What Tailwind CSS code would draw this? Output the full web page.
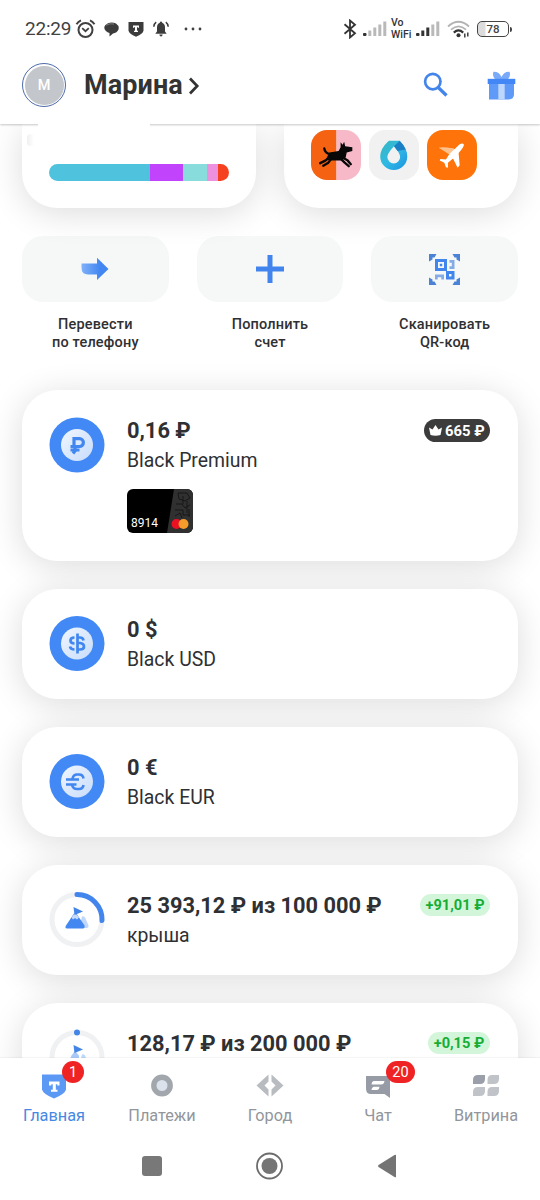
<!DOCTYPE html>
<html lang="ru">
<head>
<meta charset="utf-8">
<title>Главная</title>
<script src="https://cdn.jsdelivr.net/npm/@tailwindcss/browser@4"></script>
</head>
<body class="w-[540px] h-[1200px] overflow-hidden bg-white font-['Roboto','Noto_Sans',sans-serif] text-[#2f3033]">
<div class="flex flex-col w-[540px] h-[1200px]">

<header class="relative z-10 h-[124px] shrink-0 bg-white shadow-[0_1px_2px_rgba(0,0,0,0.22)]">
  <div class="h-[58px] flex items-center pl-[25px] pr-[28px] text-[#414141]">
    <span class="text-[19px] w-[50px] tracking-[-0.2px] whitespace-nowrap pt-[1px]">22:29</span>
    <svg class="w-[21px] h-[20px]" viewBox="0 0 21 20" fill="none" stroke="#414141" stroke-width="2"><circle cx="10.5" cy="11" r="7"/><path d="M1.5 5.2A10 10 0 0 1 6 1.4M19.5 5.2A10 10 0 0 0 15 1.4"/><path d="M7.2 9.2l3.3 3 3.3-3" stroke-width="1.8"/></svg>
    <svg class="w-[15px] h-[15px] ml-[8px]" viewBox="0 0 15 15"><path d="M4 1.2Q8-.6 12 1.6Q15.500 4 14.500 7.500Q13 10.800 9 11.500L5.500 14.500V11Q1 9.500.3 6Q.2 3 4 1.200Z" fill="#3c3c3c"/><path d="M2 3.200Q6 1 10 2" stroke="#999" stroke-width=".7" fill="none"/></svg>
    <svg class="w-[16px] h-[16px] ml-[9px]" viewBox="0 0 16 16"><path d="M.5 1H15.500V9.500Q15 13 8 15.700Q1 13 .5 9.500Z" fill="#3c3c3c"/><path d="M5 4.500h6v2.300H10V6.300H9v3.500h1v1.200H6v-1.200h1V6.300H6V6.800H5Z" fill="#fff"/></svg>
    <svg class="w-[16px] h-[16px] ml-[9px]" viewBox="0 0 16 16"><path d="M8 .6Q9 .6 9.200 1.800Q12 2.800 12 6.500V10.500L13.700 12.800H2.300L4 10.500V6.500Q4 2.800 6.800 1.800Q7 .6 8 .6ZM6.300 13.600h3.400Q9.300 15.500 8 15.500T6.300 13.600Z" fill="#3c3c3c"/><path d="M3.200 1.200Q1 2.700.8 5.800M12.800 1.200Q15 2.700 15.200 5.800" fill="none" stroke="#3c3c3c" stroke-width="1.500"/></svg>
    <svg class="w-[18px] h-[4px] ml-[15px]" viewBox="0 0 18 4" fill="#414141"><circle cx="2" cy="2" r="1.400"/><circle cx="9" cy="2" r="1.400"/><circle cx="16" cy="2" r="1.400"/></svg>
    <span class="grow"></span>
    <svg class="w-[14px] h-[20px] mr-[1px]" viewBox="0 0 14 20" fill="none" stroke="#333" stroke-width="1.800"><path d="M1.500 5.200L12 14.300L7 18.500V1.500L12 5.700L1.500 14.800"/></svg>
    <svg class="w-[24px] h-[16px] ml-[5px]" viewBox="0 0 24 16"><rect x="0" y="12" width="3.500" height="3" rx="1" fill="#333"/><g fill="#b9b9b9"><rect x="5.300" y="9.500" width="3" height="5.500"/><rect x="10.300" y="6.500" width="3" height="8.500"/><rect x="15.300" y="3.500" width="3" height="11.500"/><rect x="20.300" y=".5" width="3" height="14.500"/></g></svg>
    <div class="ml-[4px] w-[21px] flex flex-col text-[10.5px] leading-[12px] font-medium whitespace-nowrap text-[#333]"><span>Vo</span><span>WiFi</span></div>
    <svg class="w-[24px] h-[16px] ml-[4px]" viewBox="0 0 24 16"><rect x="0" y="12" width="3.500" height="3" rx="1" fill="#333"/><g fill="#333"><rect x="5.300" y="9.500" width="3" height="5.500"/><rect x="10.300" y="6.500" width="3" height="8.500"/></g><g fill="#b9b9b9"><rect x="15.300" y="3.500" width="3" height="11.500"/><rect x="20.300" y=".5" width="3" height="14.500"/></g></svg>
    <svg class="w-[23px] h-[18px] ml-[7px]" viewBox="0 0 23 18" fill="none"><path d="M1 6.500Q11.500-3 22 6.500M4 9.700Q11.500 3 19 9.700" stroke="#b3b3b3" stroke-width="1.800"/><path d="M6.800 12.600Q11.500 8.300 16.200 12.600" stroke="#333" stroke-width="2.200"/><circle cx="11.500" cy="15.300" r="2" fill="#333"/><path d="M17.800 13.500v4M20.800 12.500v4" stroke="#333" stroke-width="1.400"/></svg>
    <div class="ml-[7px] w-[32px] h-[16px] rounded-[5px] border-[1.5px] border-[#444] bg-[linear-gradient(90deg,#dcdcdc_0,#dcdcdc_7px,#fff_8px)] flex items-center justify-center text-[11.5px] font-medium text-[#444] leading-none pt-[1px]">78</div>
    <div class="w-[2px] h-[5px] ml-[1px] rounded-r bg-[#444]"></div>
  </div>
  <div class="h-[54px] flex items-center pl-[22px] pr-[24px]">
    <div class="size-[44px] rounded-full border-[1.5px] border-[#4d6aa8] p-[1.5px]"><div class="size-full rounded-full bg-[#c3c6cb] text-white flex items-center justify-center text-[14.5px] font-medium pt-[1px]">М</div></div>
    <span class="ml-[18px] w-[100px] text-[27px] font-bold tracking-[0.1px] whitespace-nowrap text-[#333]">Марина</span>
    <svg class="w-[12px] h-[18px] ml-[4px] mt-[2px]" viewBox="0 0 12 18" fill="none" stroke="#333" stroke-width="2.700"><path d="M2 1.500L9.200 9L2 16.500"/></svg>
    <span class="grow"></span>
    <svg class="w-[25px] h-[25px] mt-[-1px]" viewBox="0 0 25 25" fill="none" stroke="#4385ea"><circle cx="9.800" cy="9.600" r="7.700" stroke-width="2.700"/><path d="M15.300 15.500L23.500 23.500" stroke-width="3.200"/></svg>
    <svg class="w-[29px] h-[29px] ml-[39px]" viewBox="0 0 29 29"><path d="M6.500.8Q12 .5 14.500 6Q17 .5 22.500.8Q24 5 21 8H8Q5 5 6.500.8Z" fill="#79a9f8"/><path d="M2 12H27V24Q26.500 28 22 28.500H2Z" fill="#609af9"/><path d="M11.300 12h6.400v16.500h-6.400Z" fill="#bcd6fd"/><path d="M.7 7.800H28.300V13H.7Z" fill="#4287f5"/></svg>
  </div>
  <div class="absolute left-[38px] top-[122px] w-[112px] h-[6px] rounded bg-white"></div>
</header>

<main class="h-[934px] shrink-0 overflow-hidden px-[22px]">
  <div class="flex gap-[28px]">
    <div class="relative w-[234px] h-[84px] rounded-b-[35px] bg-white shadow-[0_5px_34px_rgba(0,0,0,0.14)] px-[27px] pt-[40px]">
      <div class="absolute left-[5px] top-[10px] w-[7px] h-[12px] rounded-full bg-linear-to-r from-[#f0f0f0] to-white"></div>
      <div class="flex w-[180px] h-[17px] rounded-full overflow-hidden"><div class="w-[101px] bg-[#4fc3dd]"></div><div class="w-[33px] bg-[#c144fc]"></div><div class="w-[24px] bg-[#88dcdb]"></div><div class="w-[11px] bg-[#ed91df]"></div><div class="w-[11px] bg-[#f5411f]"></div></div>
    </div>
    <div class="w-[234px] h-[84px] rounded-b-[35px] bg-white shadow-[0_5px_34px_rgba(0,0,0,0.14)] px-[27px] pt-[6px] flex gap-[8px]">
      <svg class="size-[50px] rounded-[16px]" viewBox="0 0 49 49"><path d="M0 0h25v49H0Z" fill="#f46212"/><path d="M25 0h24v49H25Z" fill="#f7b9c7"/><path d="M18 22L27 20.500L29 17L29 12L31 14.500L32.500 11.500L33.500 16L40.500 17L40.500 20.500L35 22L34 27L30 30H18L15 28Z" fill="#080808"/><path d="M13 18Q13.500 22.500 19 24M18 27L14 30L9 32.500M20 28L17 32L12 35M31 27L36 30L39 33.500M29 28L33 32L37 35.500" fill="none" stroke="#080808" stroke-width="2.300" stroke-linecap="round" stroke-linejoin="round"/></svg>
      <svg class="size-[50px] rounded-[16px]" viewBox="0 0 49 49"><defs><linearGradient id="drop" x1="0" y1="0" x2="1" y2="1"><stop offset="0" stop-color="#39b8bd"/><stop offset=".5" stop-color="#30b9e4"/><stop offset="1" stop-color="#1a92e2"/></linearGradient></defs><path d="M0 0h49v49H0Z" fill="#f1f1f2"/><path d="M19.500 10.500H30Q37.500 18 37.500 26A13.250 13.250 0 0 1 11 26Q11 18 19.500 10.500ZM24.500 16Q18 23 18 26.500A6.200 6.200 0 0 0 30.500 26.500Q30.500 23 24.500 16Z" fill="url(#drop)" fill-rule="evenodd"/><path d="M30 10.500Q34 14.500 36 19L28 20.500L24.500 16Z" fill="#1b7fc6"/></svg>
      <svg class="size-[50px] rounded-[16px]" viewBox="0 0 49 49"><path d="M0 0h49v49H0Z" fill="#fe740a"/><path d="M11.500 17.500Q14 16 26 18L28 20L22 24Z" fill="#ffc18c"/><path d="M32 14Q35 12.300 36 14Q37 16 31 22.500L32 34.500L30 37L25.500 28L20.500 32L20.500 37L18.500 36.500L17 32L12.500 30L13 28.500L18.500 29L22 23.500Z" fill="#fff"/></svg>
    </div>
  </div>

  <div class="grid grid-cols-3 gap-[28px] mt-[28px] text-center text-[14.5px] leading-[17.5px] font-medium tracking-[0.17px]">
    <div><div class="h-[66px] rounded-[21px] bg-[#f5f7f7]/90 flex items-center justify-center"><svg class="w-[28px] h-[24px]" viewBox="0 0 28 24"><defs><linearGradient id="arrow"><stop offset="0" stop-color="#80b1fa"/><stop offset=".7" stop-color="#4186f1"/></linearGradient></defs><path d="M.5 6.500H16V.8L27.500 12L16 23V17.500H7Q.5 17.500.5 10.500Z" fill="url(#arrow)"/></svg></div><p class="mt-[14px]">Перевести<br>по телефону</p></div>
    <div><div class="h-[66px] rounded-[21px] bg-[#f5f7f7]/90 flex items-center justify-center"><svg class="size-[28px]" viewBox="0 0 28 28" fill="#4184ee"><path d="M11.500 0h5v11.500H28v5H16.500V28h-5V16.500H0v-5h11.500Z"/></svg></div><p class="mt-[14px]">Пополнить<br>счет</p></div>
    <div><div class="h-[66px] rounded-[21px] bg-[#f5f7f7]/90 flex items-center justify-center"><svg class="size-[31px]" viewBox="0 0 31 31" fill="#4b82d6"><path d="M0 0h7.500L5.500 3.500H3.500V5.500L0 7.500ZM31 0h-7.500l2 3.500H27.500v2l3.500 2ZM0 31h7.500l-2-3.500H3.500v-2l-3.500-2ZM31 31h-7.500l2-3.500H27.500v-2l3.500-2Z"/><path d="M6 5h12v12H6ZM9 8v6h6v-6ZM10.800 9.800h2.400v2.400h-2.400ZM17 17h8.500v8.500H17ZM20 20v2.500h2.500v-2.500Z" fill="#4285ec" fill-rule="evenodd"/><path d="M20.500 6h5v9h-5v-2.700h2.300V8.700h-2.300ZM6 20.500h9v5h-2.700v-2.300H8.700v2.300H6Z" fill="#84abe5"/></svg></div><p class="mt-[14px]">Сканировать<br>QR-код</p></div>
  </div>

  <div class="mt-[39px] flex flex-col gap-[28px]">
    <section class="h-[171px] flex rounded-[35px] bg-white shadow-[0_5px_34px_rgba(0,0,0,0.14)] px-[27px] pt-[27px]">
      <svg class="size-[56px]" viewBox="0 0 56 56"><defs><linearGradient id="coin" x1="0" y1="0" x2="1" y2="1"><stop offset="0" stop-color="#f0f6ff"/><stop offset="1" stop-color="#c7dcfa"/></linearGradient></defs><circle cx="28" cy="28" r="27.500" fill="#4289f5"/><circle cx="28" cy="28" r="16" fill="url(#coin)"/><path d="M25 29V21.700H30.500A3.900 3.900 0 0 1 30.500 29.500H21.500M21.500 33H30.500M26 29V34L24 36.500" fill="none" stroke="#4187ef" stroke-width="3.200"/></svg>
      <div class="ml-[22px] grow">
        <h2 class="text-[21.8px] leading-[27px] font-bold">0,16 ₽</h2>
        <p class="text-[19.4px] leading-[33px]">Black Premium</p>
        <div class="relative mt-[12px] w-[66px] h-[44px] rounded-[6px] overflow-hidden bg-black">
          <svg class="size-full" viewBox="0 0 66 44"><path d="M47 0H66V44H40Z" fill="#303030"/><path d="M51 4h9l3 5-5 3-6-2ZM49 15h6l3 4 5-3M48 21h8v5h7M56 7v8M60 12v12M48 27l5-3 2 5M62 20v8" stroke="#171717" stroke-width="1" fill="none"/><circle cx="49.500" cy="35" r="5" fill="#eb1022"/><circle cx="56.500" cy="35" r="5" fill="#f79b2b"/></svg>
          <span class="absolute left-[4px] bottom-[3px] text-[12px] leading-[14px] text-white">8914</span>
        </div>
      </div>
      <div class="mt-[2px] mr-[1px] w-[66px] h-[23px] rounded-full bg-[#3c3c3c] text-white flex items-center pl-[5px] pt-[1px] text-[14.8px] font-bold whitespace-nowrap"><svg class="w-[13px] h-[11px] mr-[3px] mt-[-1px]" viewBox="0 0 13 11"><path d="M0 2.500L3.500 4.500L6.500 0L9.500 4.500L13 2.500L11.500 10Q6.500 11.500 1.500 10Z" fill="#fff"/></svg>665 ₽</div>
    </section>

    <section class="h-[110px] flex rounded-[35px] bg-white shadow-[0_5px_34px_rgba(0,0,0,0.14)] px-[27px] pt-[27px]">
      <svg class="size-[56px]" viewBox="0 0 56 56"><circle cx="28" cy="27.500" r="27.500" fill="#4289f5"/><circle cx="28" cy="27.500" r="16" fill="url(#coin)"/><path d="M28.500 17.500V37.500M28.500 21.500H31Q34 21.500 34.500 24.500M28.500 27H31Q35 27.500 35 30.500Q35 33.500 31 33.500H28.500M25.500 21.500Q21.500 21.500 21.500 24.500T25.500 27.500M21 30.500Q21.500 33.500 25.500 33.500" fill="none" stroke="#4187ef" stroke-width="2.700"/></svg>
      <div class="ml-[22px] grow"><h2 class="text-[21.8px] leading-[27px] font-bold">0 $</h2><p class="text-[19.4px] leading-[33px]">Black USD</p></div>
    </section>

    <section class="h-[110px] flex rounded-[35px] bg-white shadow-[0_5px_34px_rgba(0,0,0,0.14)] px-[27px] pt-[27px]">
      <svg class="size-[56px]" viewBox="0 0 56 56"><circle cx="28" cy="27.500" r="27.500" fill="#4289f5"/><circle cx="28" cy="27.500" r="16" fill="url(#coin)"/><path d="M34.500 24.500Q34 20.500 30 20.500H28Q24.500 20.500 23.500 24.500M17 25.500H30M17 30.500H27.500M23 31Q24 35 28 35H30Q34 35 34.500 31" fill="none" stroke="#4187ef" stroke-width="2.600"/></svg>
      <div class="ml-[22px] grow"><h2 class="text-[21.8px] leading-[27px] font-bold">0 €</h2><p class="text-[19.4px] leading-[33px]">Black EUR</p></div>
    </section>

    <section class="h-[110px] flex rounded-[35px] bg-white shadow-[0_5px_34px_rgba(0,0,0,0.14)] px-[27px] pt-[27px]">
      <svg class="size-[56px] overflow-visible" viewBox="0 0.5 56 56"><circle cx="28" cy="28" r="25" fill="none" stroke="#f0f1f2" stroke-width="5"/><path d="M28 3A25 25 0 0 1 53 29" fill="none" stroke="#4285ec" stroke-width="5" stroke-linecap="round"/><path d="M33 25Q34.500 24 36 26L39.500 34Q40 36 38 36.500H30Z" fill="#bfd7fb"/><path d="M25 22Q26.500 21 28 23L35.500 34Q36 37 34 37H18Q15.500 37 17 34Z" fill="#4387f0"/><path d="M22.500 26L26 21.500L30 26L28 28L26 26.500L24 28Z" fill="#c7dcfb"/><path d="M24.500 15.500L34 20L25.500 23.500Z" fill="#4285e6"/></svg>
      <div class="ml-[22px] grow"><h2 class="text-[21.8px] leading-[27px] font-bold whitespace-nowrap">25 393,12 ₽ из 100 000 ₽</h2><p class="text-[19.4px] leading-[33px]">крыша</p></div>
      <div class="mt-[2px] mr-[1px] w-[70px] h-[22px] rounded-full bg-[#d3f6da] text-[#17ad35] flex items-center justify-center text-[14.6px] font-bold whitespace-nowrap pt-[1px]">+91,01 ₽</div>
    </section>

    <section class="h-[110px] flex rounded-[35px] bg-white shadow-[0_5px_34px_rgba(0,0,0,0.14)] px-[27px] pt-[27px]">
      <svg class="size-[56px] overflow-visible" viewBox="0 0.5 56 56"><circle cx="28" cy="28" r="25" fill="none" stroke="#f0f1f2" stroke-width="5"/><circle cx="28" cy="3" r="3" fill="#4285e6"/><path d="M33 25Q34.500 24 36 26L39.500 34Q40 36 38 36.500H30Z" fill="#bfd7fb"/><path d="M22.500 26L26 21.500L30 26V32H20Z" fill="#a9c9f8"/><path d="M24.500 15.500L34 20L25.500 23.500Z" fill="#4285e6"/></svg>
      <div class="ml-[22px] grow"><h2 class="text-[21.8px] leading-[27px] font-bold whitespace-nowrap">128,17 ₽ из 200 000 ₽</h2></div>
      <div class="mt-[2px] mr-[1px] w-[62px] h-[22px] rounded-full bg-[#d3f6da] text-[#17ad35] flex items-center justify-center text-[14.6px] font-bold whitespace-nowrap pt-[1px]">+0,15 ₽</div>
    </section>
  </div>
</main>

<footer class="relative z-10 h-[142px] shrink-0 bg-white shadow-[0_-1px_1px_rgba(0,0,0,0.04)]">
  <nav class="grid grid-cols-5 h-[74px] text-center text-[16.3px] leading-[20px] text-[#92969c]">
    <div class="relative flex flex-col items-center pt-[15px] text-[#4688e2]"><svg class="size-[26px]" viewBox="0 0 26 26"><path d="M1 1.500H25V16.500Q24 21 13 25.500Q2 21 1 16.500Z" fill="#5c99f4"/><path d="M8 8.500h10.500v4H16.300V11.200H14.800v5.500H16.500v2H10v-2h1.800v-5.500H10.300v1.300H8Z" fill="#fff"/></svg><span class="mt-[7px]">Главная</span><span class="absolute left-[62px] top-[3px] size-[22px] rounded-full bg-[#ef2323] text-white text-[14.5px] leading-[23px]">1</span></div>
    <div class="flex flex-col items-center pt-[15px]"><svg class="size-[26px]" viewBox="0 0 26 26"><circle cx="13" cy="12.500" r="8.200" fill="#dbe2ec" stroke="#a2a6ad" stroke-width="5.400"/></svg><span class="mt-[7px]">Платежи</span></div>
    <div class="flex flex-col items-center pt-[15px]"><svg class="size-[28px] mb-[-2px]" viewBox="-1 0 28 28" fill="#b8bbbf"><path d="M11.500 1.500V8.500L7.500 12.500L11.500 16.500V23.500L-.5 12.500ZM14.500 1.500V8.500L18.500 12.500L14.500 16.500V23.500L26.500 12.500Z"/></svg><span class="mt-[7px]">Город</span></div>
    <div class="relative flex flex-col items-center pt-[15px]"><svg class="size-[26px]" viewBox="0 0 26 26"><path d="M1 3H25V25L19.500 21H6Q1 21 1 15.500Z" fill="#969ba5"/><path d="M8.500 8H19.500Q19 11.500 16 11.500H6.500Q6.500 8.500 8.500 8ZM8.500 13.800H14.500Q14 17 12 17H6.500Q6.500 14.500 8.500 13.800Z" fill="#fff"/></svg><span class="mt-[7px]">Чат</span><span class="absolute left-[62px] top-[3px] w-[29px] h-[22px] rounded-full bg-[#ef2323] text-white text-[14.5px] leading-[23px]">20</span></div>
    <div class="flex flex-col items-center pt-[15px]"><svg class="size-[26px]" viewBox="0 0 26 26" fill="#c0c3c8"><path d="M5 2H12V6Q12 11 7 11H0V7Q0 2 5 2Z" fill="#9a9fa9"/><path d="M19 2H26V6Q26 11 21 11H14.500V7Q14.500 2 19 2ZM5 14H12V18Q12 23 7 23H0V19Q0 14 5 14ZM19 14H26V18Q26 23 21 23H14.500V19Q14.500 14 19 14Z"/></svg><span class="mt-[7px]">Витрина</span></div>
  </nav>
  <div class="flex items-center h-[68px] pl-[142px] pb-[1px]">
    <div class="size-[20px] rounded-[3px] bg-[#787878]"></div>
    <svg class="size-[28px] ml-[94px]" viewBox="0 0 28 28"><circle cx="13.500" cy="14" r="12.500" fill="none" stroke="#6c6c6c" stroke-width="1.800"/><circle cx="13.500" cy="14" r="8" fill="#757575"/></svg>
    <svg class="w-[20px] h-[24px] ml-[93px]" viewBox="0 0 20 24"><path d="M19 1V23Q18.500 23.500 17.500 23L1.500 13Q.5 12 1.500 11L17.500 1Q18.500.5 19 1Z" fill="#747474"/></svg>
  </div>
</footer>
</div>
</body>
</html>
